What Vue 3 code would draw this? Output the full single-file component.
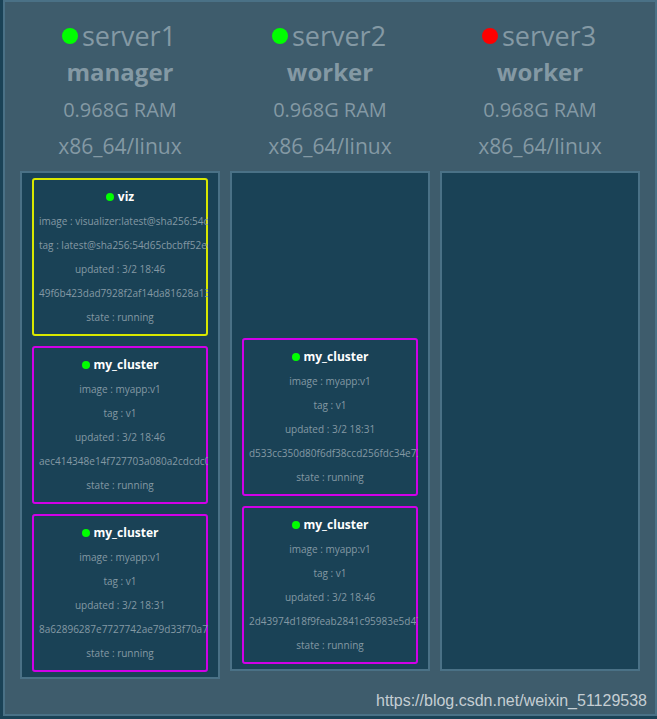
<script setup>
const nodes = [
  {
    name: 'server1',
    role: 'manager',
    up: true,
    tasks: [
      { name: 'viz', service: 'viz', image: 'visualizer:latest@sha256:54d', tag: 'latest@sha256:54d65cbcbff52ee', updated: '3/2 18:46', id: '49f6b423dad7928f2af14da81628a13' },
      { name: 'my_cluster', service: 'app', image: 'myapp:v1', tag: 'v1', updated: '3/2 18:46', id: 'aec414348e14f727703a080a2cdcdc0' },
      { name: 'my_cluster', service: 'app', image: 'myapp:v1', tag: 'v1', updated: '3/2 18:31', id: '8a62896287e7727742ae79d33f70a7' },
    ],
  },
  {
    name: 'server2',
    role: 'worker',
    up: true,
    tasks: [
      { name: 'my_cluster', service: 'app', image: 'myapp:v1', tag: 'v1', updated: '3/2 18:31', id: 'd533cc350d80f6df38ccd256fdc34e73' },
      { name: 'my_cluster', service: 'app', image: 'myapp:v1', tag: 'v1', updated: '3/2 18:46', id: '2d43974d18f9feab2841c95983e5d47' },
    ],
  },
  { name: 'server3', role: 'worker', up: false, tasks: [] },
]
</script>

<template>
  <main class="cluster">
    <div class="nodes">
      <section v-for="node in nodes" :key="node.name" class="node">
        <header class="node-head">
          <h2 class="node-name"><span class="dot" :class="{ down: !node.up }"></span>{{ node.name }}</h2>
          <strong class="role">{{ node.role }}</strong>
          <span class="memory">0.968G RAM</span>
          <span class="platform">x86_64/linux</span>
        </header>
        <div class="tasks">
          <article v-for="task in node.tasks" :key="task.id" class="task" :class="task.service">
            <h3 class="task-name"><span class="dot small"></span>{{ task.name }}</h3>
            <p>image : {{ task.image }}</p>
            <p>tag : {{ task.tag }}</p>
            <p>updated : {{ task.updated }}</p>
            <p>{{ task.id }}</p>
            <p>state : running</p>
          </article>
        </div>
      </section>
    </div>
    <footer class="credit">https://blog.csdn.net/weixin_51129538</footer>
  </main>
</template>

<style>
body {
  background: #1a4256;
}
</style>

<style scoped>
.cluster {
  box-sizing: border-box;
  margin: 0 0 3px 3px;
  padding: 16px 15px 3px;
  border: 2px solid #4a7186;
  background: #3e5c6c;
  color: #8499a4;
  font-family: "Open Sans", sans-serif;
}

.nodes {
  display: grid;
  grid-template-columns: repeat(3, minmax(0, 200px));
  align-items: start;
  gap: 10px;
}

.node-head {
  display: flex;
  flex-direction: column;
  align-items: center;
  line-height: 36px;
  padding-bottom: 9px;
}

.node-name {
  display: flex;
  align-items: center;
  gap: 4px;
  margin: 0;
  padding-right: 2px;
  font-size: 27px;
  font-weight: 400;
}

.dot {
  width: 16px;
  height: 16px;
  border-radius: 50%;
  background: #00ff00;
}

.dot.down {
  background: #ff0000;
}

.dot.small {
  width: 8px;
  height: 8px;
}

.role {
  font-size: 24px;
  font-weight: 700;
}

.memory {
  font-size: 20px;
  line-height: 40px;
}

.platform {
  font-size: 21px;
  line-height: 32px;
}

.tasks {
  box-sizing: border-box;
  display: flex;
  flex-direction: column;
  justify-content: flex-end;
  gap: 10px;
  min-height: 500px;
  padding: 5px 10px;
  border: 2px solid #4a7186;
  background: #1a4256;
}

.task {
  overflow: clip;
  overflow-clip-margin: border-box;
  padding: 5px;
  border: 2px solid #d000e8;
  border-radius: 3px;
  font-size: 10px;
  line-height: 24px;
  text-align: center;
  white-space: nowrap;
}

.task.viz {
  border-color: #d8e800;
}

.task-name {
  display: flex;
  align-items: center;
  justify-content: center;
  gap: 4px;
  margin: 0;
  color: #fff;
  font-size: 12px;
  font-weight: 700;
}

.task p {
  margin: 0;
}

.credit {
  margin-top: 12px;
  margin-right: -7px;
  color: #c5ced3;
  font-family: "Liberation Sans", sans-serif;
  font-size: 16px;
  line-height: 20px;
  text-align: right;
}
</style>
